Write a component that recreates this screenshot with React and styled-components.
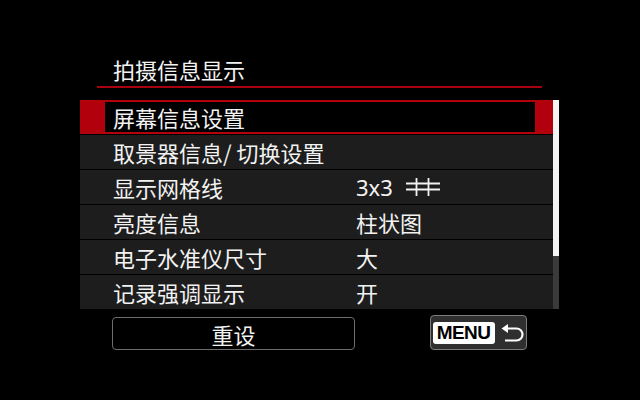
import React from 'react';
import { styled, createGlobalStyle } from 'styled-components';

const GlobalStyle = createGlobalStyle`
    html, body {
        margin: 0;
        padding: 0;
        background: #000;
    }
    * {
        box-sizing: border-box;
    }
`;

const Screen = styled.div`
    width: 640px;
    height: 400px;
    background: #000;
    color: #f2f2f2;
    font-family: "Noto Sans CJK SC", "Noto Sans", sans-serif;
    padding-top: 55px;
    overflow: hidden;
`;

const Header = styled.h1`
    margin: 0 0 0 97px;
    width: 445px;
    height: 33px;
    padding-left: 16px;
    font-size: 22px;
    font-weight: 400;
    line-height: 28px;
    border-bottom: 2px solid #a8000e;
`;

const ListWrap = styled.div`
    display: flex;
    margin: 12px 0 0 80px;
    width: 479px;
`;

const List = styled.div`
    width: 473px;
    display: flex;
    flex-direction: column;
    gap: 1px;
`;

const Row = styled.div`
    height: 34px;
    display: flex;
    background: ${p => (p.$selected ? '#b2000c' : '#1d1d1d')};
    padding: ${p => (p.$selected ? '2px 18px 2px 25px' : '0 0 0 33px')};
`;

const Cell = styled.div`
    flex: 1;
    display: grid;
    grid-template-columns: 243px 1fr;
    align-items: center;
    background: ${p => (p.$selected ? '#000' : 'transparent')};
    padding-left: ${p => (p.$selected ? '8px' : '0')};
    font-size: 22px;
    line-height: 1;
    white-space: nowrap;
`;

const Value = styled.span`
    display: flex;
    align-items: center;
    gap: 13px;
`;

const Latin = styled.span`
    font-family: "Noto Sans", "Liberation Sans", sans-serif;
    font-size: 22px;
`;

const Scrollbar = styled.div`
    width: 6px;
    display: flex;
    flex-direction: column;
    height: 209px;
`;

const Thumb = styled.div`
    height: 156px;
    background: #f4f4f4;
`;

const Track = styled.div`
    flex: 1;
    background: #3a3a3a;
`;

const Footer = styled.div`
    display: flex;
    align-items: flex-end;
    margin-top: 6px;
    padding-left: 112px;
`;

const ResetButton = styled.div`
    width: 243px;
    height: 33px;
    border: 1px solid #6e6e6e;
    border-radius: 4px;
    display: flex;
    align-items: center;
    justify-content: center;
    font-size: 22px;
    line-height: 1;
`;

const MenuButton = styled.div`
    margin-left: 75px;
    width: 97px;
    height: 35px;
    background: #2f2f2f;
    border: 1.5px solid #7c7c7c;
    border-radius: 4px;
    display: flex;
    align-items: center;
    padding-left: 1.5px;
    gap: 6px;
`;

const MenuLabel = styled.div`
    width: 62px;
    height: 22px;
    background: #fff;
    border-radius: 3px;
    display: flex;
    align-items: center;
    justify-content: center;
    color: #000;
    font-family: "Liberation Sans", Arial, sans-serif;
    font-weight: 700;
    font-size: 19px;
    line-height: 1;
    letter-spacing: -0.6px;
`;

const GridIcon = () => (
    <svg width="34" height="18" viewBox="0 0 34 18">
        <g stroke="#f2f2f2" strokeWidth="1.8">
            <line x1="0" y1="5.5" x2="34" y2="5.5" />
            <line x1="0" y1="11.5" x2="34" y2="11.5" />
            <line x1="10.5" y1="0" x2="10.5" y2="18" />
            <line x1="22.5" y1="0" x2="22.5" y2="18" />
        </g>
    </svg>
);

const ReturnIcon = () => (
    <svg width="24" height="18" viewBox="0 0 24 18">
        <path d="M0.5 4.5 L7 0 L7 9 Z" fill="#fff" />
        <path d="M6 4.5 H15.5 A6 6 0 0 1 15.5 16.5 H4" fill="none" stroke="#fff" strokeWidth="2.2" />
    </svg>
);

const items = [
    { label: '屏幕信息设置', selected: true },
    { label: '取景器信息/ 切换设置' },
    { label: '显示网格线', value: <><Latin>3x3</Latin><GridIcon /></> },
    { label: '亮度信息', value: '柱状图' },
    { label: '电子水准仪尺寸', value: '大' },
    { label: '记录强调显示', value: '开' },
];

const App = () => {
    return (
        <>
            <GlobalStyle />
            <Screen>
                <Header>拍摄信息显示</Header>
                <ListWrap>
                    <List>
                        {items.map(item => (
                            <Row key={item.label} $selected={item.selected}>
                                <Cell $selected={item.selected}>
                                    <span>{item.label}</span>
                                    {item.value && <Value>{item.value}</Value>}
                                </Cell>
                            </Row>
                        ))}
                    </List>
                    <Scrollbar>
                        <Thumb />
                        <Track />
                    </Scrollbar>
                </ListWrap>
                <Footer>
                    <ResetButton>重设</ResetButton>
                    <MenuButton>
                        <MenuLabel>MENU</MenuLabel>
                        <ReturnIcon />
                    </MenuButton>
                </Footer>
            </Screen>
        </>
    );
};

export default App;
